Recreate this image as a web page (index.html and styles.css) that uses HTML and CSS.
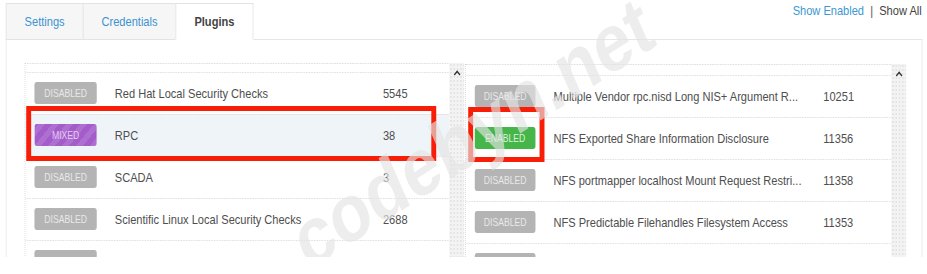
FILE: index.html
```html
<!DOCTYPE html>
<html lang="en">
<head>
<meta charset="utf-8">
<title>Plugins</title>
<link rel="stylesheet" href="styles.css">
</head>
<body>
<div class="screen">
<div class="page">
  <div class="topbar">
    <ul class="tabs">
      <li class="tab">Settings</li>
      <li class="tab">Credentials</li>
      <li class="tab active">Plugins</li>
    </ul>
    <div class="filters"><span class="link">Show Enabled</span><span class="sep">|</span><span class="plain">Show All</span></div>
  </div>
  <div class="panel">
    <div class="columns">
      <div class="col col-left">
        <div class="list">
          <div class="row"><span class="badge disabled">Disabled</span><span class="name">Red Hat Local Security Checks</span><span class="count">5545</span></div>
          <div class="row selected"><span class="badge mixed">Mixed</span><span class="name">RPC</span><span class="count">38</span></div>
          <div class="row"><span class="badge disabled">Disabled</span><span class="name">SCADA</span><span class="count">3</span></div>
          <div class="row"><span class="badge disabled">Disabled</span><span class="name">Scientific Linux Local Security Checks</span><span class="count">2688</span></div>
          <div class="row"><span class="badge disabled">Disabled</span><span class="name">Service detection</span><span class="count">462</span></div>
        </div>
        <div class="scrollbar"><svg class="caret" width="9" height="6" viewBox="0 0 9 6"><path d="M1 5 L4.5 1.5 L8 5" fill="none" stroke="#333" stroke-width="1.6"/></svg></div>
      </div>
      <div class="col col-right">
        <div class="list list-right">
          <div class="row"><span class="badge disabled">Disabled</span><span class="name">Multiple Vendor rpc.nisd Long NIS+ Argument R...</span><span class="count">10251</span></div>
          <div class="row"><span class="badge enabled">Enabled</span><span class="name">NFS Exported Share Information Disclosure</span><span class="count">11356</span></div>
          <div class="row"><span class="badge disabled">Disabled</span><span class="name">NFS portmapper localhost Mount Request Restri...</span><span class="count">11358</span></div>
          <div class="row"><span class="badge disabled">Disabled</span><span class="name">NFS Predictable Filehandles Filesystem Access</span><span class="count">11353</span></div>
          <div class="row"><span class="badge disabled">Disabled</span><span class="name"></span><span class="count"></span></div>
        </div>
        <div class="scrollbar"><svg class="caret" width="9" height="6" viewBox="0 0 9 6"><path d="M1 5 L4.5 1.5 L8 5" fill="none" stroke="#333" stroke-width="1.6"/></svg></div>
      </div>
    </div>
  </div>
  <div class="annot annot-left"></div>
  <div class="annot annot-right"></div>
  <div class="watermark">codebyn.net</div>
</div>
</div>
</body>
</html>
```

FILE: styles.css
```css
* { box-sizing: border-box; }
html, body {
  margin: 0;
  padding: 0;
  background: #fff;
  overflow: hidden;
}
body {
  font-family: "Liberation Sans", Arial, sans-serif;
  font-size: 13.5px;
  color: #505050;
}
.screen {
  width: 927px;
  height: 274px;
  overflow: hidden;
  background: #fff;
}
/* the captured screen is horizontally condensed: lay out at full width, then squeeze */
.page {
  position: relative;
  width: 1130px;
  height: 257px;
  overflow: hidden;
  background: #fff;
  transform: scaleX(0.82);
  transform-origin: 0 0;
}
.topbar {
  display: flex;
  justify-content: space-between;
  align-items: flex-start;
  padding: 3px 6px 0 7px;
}
.tabs {
  display: flex;
  list-style: none;
  margin: 0 0 -1px 0;
  padding: 0;
  height: 37px;
}
.tab {
  height: 37px;
  line-height: 36px;
  padding: 0 22px;
  border: 1px solid #e3e3e3;
  background: #f6f6f6;
  color: #3b93d1;
  margin-left: -1px;
}
.tab:first-child { margin-left: 0; }
.tab.active {
  background: #fff;
  color: #444;
  font-weight: bold;
  border-bottom-color: #fff;
  position: relative;
  z-index: 1;
}
.filters {
  line-height: 16px;
  display: flex;
}
.link { color: #3d97d3; }
.sep { color: #555; margin: 0 7.5px; }
.plain { color: #444; }
.panel {
  margin: 0 5px 0 7px;
  border: 1px solid #e6e6e6;
  padding: 23px 0 0 22px;
  height: 230px;
}
.columns {
  display: flex;
  gap: 1px;
  align-items: flex-start;
}
.col {
  display: flex;
  align-items: stretch;
}
.col-right { margin-top: 1px; }
.list {
  border-top: 1px dotted #d6d6d6;
  border-left: 1px dotted #d6d6d6;
  padding-top: 8px;
  width: 518px;
}
.list-right { padding-top: 10px; width: 520px; }
.row {
  display: flex;
  align-items: center;
  height: 42px;
  border-top: 1px dotted #d9d9d9;
  padding-left: 11px;
  padding-bottom: 1px;
}
.row.selected { background: #eff4f9; }
.badge {
  flex: none;
  width: 76px;
  height: 22px;
  line-height: 22px;
  border-radius: 3px;
  text-align: center;
  text-transform: uppercase;
  font-size: 10.5px;
}
.list-right .badge { width: 74px; }
.badge.disabled { background: #b4b4b4; color: #e9e9e9; }
.badge.enabled { background: #46b64a; color: #dcf2dc; }
.badge.mixed {
  background-color: #a35cca;
  background-image: repeating-linear-gradient(-45deg, rgba(255,255,255,0.12) 0 6px, transparent 6px 12px);
  color: #e3cdf1;
}
.name {
  flex: none;
  margin-left: 22px;
  width: 327px;
  white-space: nowrap;
  overflow: hidden;
  text-overflow: ellipsis;
  color: #4e4e4e;
}
.list-right .name { width: 312px; margin-right: 17px; }
.count { color: #4e4e4e; }
.scrollbar {
  width: 18px;
  background-color: #f3f3f3;
  background-image: radial-gradient(circle, #e3e3e3 0.7px, transparent 0.9px);
  background-size: 4px 4px;
  display: flex;
  justify-content: center;
  padding-top: 7px;
}
.caret { display: block; }
.annot {
  position: absolute;
  border: 5px solid #f81d06;
  border-left-width: 6px;
  border-right-width: 6px;
  pointer-events: none;
}
.annot-left { left: 32px; top: 106px; width: 500px; height: 55px; }
.annot-right { left: 571px; top: 107px; width: 93px; height: 55px; }
.watermark {
  position: absolute;
  left: 576px;
  top: 133px;
  transform: translate(-50%, -50%) rotate(-28deg);
  font-family: "Liberation Sans", Arial, sans-serif;
  font-weight: bold;
  font-size: 82px;
  color: rgba(228, 228, 228, 0.65);
  white-space: nowrap;
  pointer-events: none;
}
```
